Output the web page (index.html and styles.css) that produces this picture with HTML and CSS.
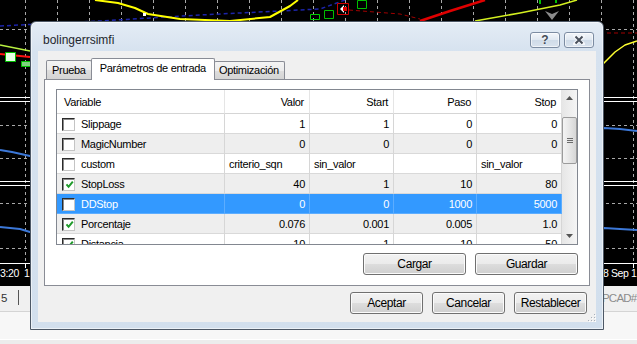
FILE: index.html
```html
<!DOCTYPE html>
<html lang="es">
<head>
    <meta charset="UTF-8">
    <title>bolingerrsimfi</title>
    <link rel="stylesheet" href="styles.css">
</head>
<body>
<div class="screen">
    <!-- grafico de fondo (MetaTrader) -->
    <svg class="chart" width="637" height="344" viewBox="0 0 637 344">
        <defs>
            <pattern id="vgrid" x="25" y="0" width="32" height="6" patternUnits="userSpaceOnUse">
                <rect width="1" height="3" fill="#a8a8a8"/>
            </pattern>
        </defs>
        <rect width="637" height="286" fill="#000"/>
        <rect width="637" height="263" fill="url(#vgrid)"/>
        <g stroke="#a8a8a8" stroke-dasharray="3 3">
            <line x1="0" y1="29.5" x2="637" y2="29.5"/>
            <line x1="0" y1="125.5" x2="637" y2="125.5"/>
            <line x1="0" y1="158.5" x2="637" y2="158.5"/>
            <line x1="0" y1="203.5" x2="637" y2="203.5"/>
            <line x1="0" y1="248.5" x2="637" y2="248.5"/>
        </g>
        <g stroke="#fff">
            <line x1="0" y1="97.5" x2="637" y2="97.5"/>
            <line x1="0" y1="101.5" x2="637" y2="101.5"/>
            <line x1="0" y1="181.5" x2="637" y2="181.5"/>
            <line x1="0" y1="185.5" x2="637" y2="185.5"/>
            <line x1="0" y1="263.5" x2="637" y2="263.5"/>
            <line x1="25.5" y1="263" x2="25.5" y2="268"/>
            <line x1="633.5" y1="263" x2="633.5" y2="268"/>
        </g>
        <!-- indicadores -->
        <g fill="none" stroke-linejoin="round">
            <polyline points="0,26 100,21 200,15 320,9 345,0" stroke="#1c24a8" stroke-width="1.5" stroke-dasharray="4 3"/>
            <polyline points="95,0 118,3 135,8 148,14 180,19 230,21 270,17 290,6 298,0" stroke="#ffff00" stroke-width="2"/>
            <polyline points="0,45 30,51" stroke="#b8f040" stroke-width="1.5"/>
            <polyline points="0,54 30,57" stroke="#ff1010" stroke-width="2"/>
            <polyline points="349,10 400,14 420,19" stroke="#a00000" stroke-dasharray="4 3"/>
            <polyline points="420,21 450,11 485,0" stroke="#e00000" stroke-width="2.5"/>
            <polyline points="475,21 520,13 560,5 577,0" stroke="#d4f020" stroke-width="1.5"/>
            <polyline points="600,33 637,33" stroke="#a00000" stroke-dasharray="4 3"/>
            <polyline points="603,64 615,52 625,45 637,41" stroke="#ffff30" stroke-width="1.5"/>
            <polyline points="0,150 12,152 30,156 604,128 620,129 637,131" stroke="#3c78d8" stroke-width="2"/>
            <polyline points="0,227 20,229 30,232 604,228 620,229 637,230" stroke="#3c78d8" stroke-width="2"/>
            <rect x="5.5" y="52.5" width="10" height="9" stroke="#00c000" fill="#e6ffe6"/>
            <rect x="21.5" y="61.5" width="9" height="5" stroke="#00c000" fill="#7fd27f"/>
            <rect x="310.5" y="14.5" width="9" height="5" stroke="#00d000"/>
            <rect x="324.5" y="10.5" width="9" height="8" stroke="#00c000"/>
            <rect x="357.5" y="0.5" width="9" height="8" stroke="#00c000"/>
            <rect x="337.5" y="3.5" width="11" height="11" stroke="#d00000"/>
            <line x1="540" y1="0" x2="540" y2="4" stroke="#00c000" stroke-width="2"/>
            <line x1="556" y1="0" x2="556" y2="3" stroke="#00c000" stroke-width="2"/>
        </g>
        <rect x="143" y="13" width="3" height="3" fill="#fff"/>
        <polygon points="340,9 344,5 344,13" fill="#fff"/>
        <rect x="343" y="7" width="4" height="4" fill="#e00000"/>
        <polygon points="545,11 552,14 559,11 552,20" fill="#8a8a8a"/>
        <g font-family="Liberation Sans, Arial, sans-serif" font-size="10.5" letter-spacing="-0.4" fill="#fff">
            <text x="0" y="277">3:20</text>
            <text x="24" y="277">1</text>
            <text x="603" y="277">8 Sep 1</text>
        </g>
        <!-- barra inferior -->
        <rect y="286" width="637" height="25" fill="#f0f0f0"/>
        <rect y="311" width="637" height="1" fill="#d4d4d4"/>
        <rect y="312" width="637" height="27" fill="#f7f7f7"/>
        <rect y="339" width="637" height="1" fill="#fff"/>
        <rect y="340" width="637" height="4" fill="#ececec"/>
        <g font-family="Liberation Sans, Arial, sans-serif" font-size="11.5" letter-spacing="-0.8">
            <text x="1" y="302" fill="#333">5</text>
            <text x="602" y="302" fill="#8c8c8c">PCAD#</text>
        </g>
        <line x1="18.5" y1="290" x2="18.5" y2="305" stroke="#555"/>
    </svg>

    <div class="window">
        <div class="titlebar">
            <span class="title">bolingerrsimfi</span>
            <span class="tbtn help">?</span>
            <span class="tbtn">
                <svg width="12" height="10" viewBox="0 0 12 10">
                    <path d="M2 1 L10 9 M10 1 L2 9" stroke="#f6f8fb" stroke-width="4" stroke-linecap="round"/>
                    <path d="M2.5 1.5 L9.5 8.5 M9.5 1.5 L2.5 8.5" stroke="#4a515c" stroke-width="2"/>
                </svg>
            </span>
        </div>

        <div class="client">
            <div class="tabs">
                <div class="tab">Prueba</div>
                <div class="tab active">Parámetros de entrada</div>
                <div class="tab">Optimización</div>
            </div>

            <div class="panel">
                <div class="list">
                    <div class="grid">
                        <div class="row head">
                            <div class="cell">Variable</div>
                            <div class="cell num">Valor</div>
                            <div class="cell num">Start</div>
                            <div class="cell num">Paso</div>
                            <div class="cell num">Stop</div>
                        </div>
                        <div class="row">
                            <div class="cell var"><span class="check"></span>Slippage</div>
                            <div class="cell num">1</div>
                            <div class="cell num">1</div>
                            <div class="cell num">0</div>
                            <div class="cell num">0</div>
                        </div>
                        <div class="row alt">
                            <div class="cell var"><span class="check"></span>MagicNumber</div>
                            <div class="cell num">0</div>
                            <div class="cell num">0</div>
                            <div class="cell num">0</div>
                            <div class="cell num">0</div>
                        </div>
                        <div class="row">
                            <div class="cell var"><span class="check"></span>custom</div>
                            <div class="cell">criterio_sqn</div>
                            <div class="cell">sin_valor</div>
                            <div class="cell"></div>
                            <div class="cell">sin_valor</div>
                        </div>
                        <div class="row alt">
                            <div class="cell var"><span class="check on"><svg viewBox="0 0 9 9"><path d="M1.5 4.3 L3.6 6.8 L7.8 1.6"/></svg></span>StopLoss</div>
                            <div class="cell num">40</div>
                            <div class="cell num">1</div>
                            <div class="cell num">10</div>
                            <div class="cell num">80</div>
                        </div>
                        <div class="row selected">
                            <div class="cell var"><span class="check"></span>DDStop</div>
                            <div class="cell num">0</div>
                            <div class="cell num">0</div>
                            <div class="cell num">1000</div>
                            <div class="cell num">5000</div>
                        </div>
                        <div class="row alt">
                            <div class="cell var"><span class="check on"><svg viewBox="0 0 9 9"><path d="M1.5 4.3 L3.6 6.8 L7.8 1.6"/></svg></span>Porcentaje</div>
                            <div class="cell num">0.076</div>
                            <div class="cell num">0.001</div>
                            <div class="cell num">0.005</div>
                            <div class="cell num">1.0</div>
                        </div>
                        <div class="row">
                            <div class="cell var"><span class="check on"><svg viewBox="0 0 9 9"><path d="M1.5 4.3 L3.6 6.8 L7.8 1.6"/></svg></span>Distancia</div>
                            <div class="cell num">10</div>
                            <div class="cell num">1</div>
                            <div class="cell num">10</div>
                            <div class="cell num">50</div>
                        </div>
                    </div>
                    <div class="scrollbar">
                        <div class="sb-arrow"><svg width="7" height="4" viewBox="0 0 7 4"><path d="M0 4 L3.5 0 L7 4 Z" fill="#555"/></svg></div>
                        <div class="sb-thumb"><span></span><span></span><span></span></div>
                        <div class="sb-space"></div>
                        <div class="sb-arrow"><svg width="7" height="4" viewBox="0 0 7 4"><path d="M0 0 L3.5 4 L7 0 Z" fill="#555"/></svg></div>
                    </div>
                </div>
                <div class="panel-buttons">
                    <button class="btn wide">Cargar</button>
                    <button class="btn wide">Guardar</button>
                </div>
            </div>

            <div class="actions">
                <button class="btn">Aceptar</button>
                <button class="btn">Cancelar</button>
                <button class="btn">Restablecer</button>
            </div>

            <svg class="grip" width="9" height="9" viewBox="0 0 9 9">
                <g fill="#fff">
                    <rect x="8" y="2" width="1" height="1"/><rect x="8" y="5" width="1" height="1"/><rect x="5" y="5" width="1" height="1"/>
                    <rect x="8" y="8" width="1" height="1"/><rect x="5" y="8" width="1" height="1"/><rect x="2" y="8" width="1" height="1"/>
                </g>
                <g fill="#a8b0ba">
                    <rect x="7" y="1" width="1" height="1"/><rect x="7" y="4" width="1" height="1"/><rect x="4" y="4" width="1" height="1"/>
                    <rect x="7" y="7" width="1" height="1"/><rect x="4" y="7" width="1" height="1"/><rect x="1" y="7" width="1" height="1"/>
                </g>
            </svg>
        </div>
    </div>
</div>
</body>
</html>
```

FILE: styles.css
```css
body {
    margin: 0;
    background: #000;
    font-family: "Liberation Sans", Arial, sans-serif;
    font-size: 11px;
    letter-spacing: -0.3px;
    color: #000;
}
.screen {
    position: relative;
    width: 637px;
    height: 344px;
    overflow: hidden;
}
.chart {
    position: absolute;
    left: 0;
    top: 0;
}

/* ventana de dialogo */
.window {
    position: absolute;
    left: 30px;
    top: 21px;
    width: 572px;
    height: 307px;
    border: 1px solid #4d5866;
    border-radius: 6px 6px 0 0;
    background: linear-gradient(#e4ecf5, #d6e2ef 30px, #d2dfed);
    box-shadow: inset 0 0 0 1px rgba(255, 255, 255, 0.55);
    display: flex;
    flex-direction: column;
}
.titlebar {
    height: 29px;
    box-sizing: border-box;
    padding: 10px 9px 0 12px;
    display: flex;
    align-items: flex-start;
    gap: 4px;
}
.title {
    flex: 1;
    font-size: 12px;
    letter-spacing: 0;
    line-height: 17px;
    color: #1f262e;
}
.tbtn {
    width: 28px;
    height: 14px;
    border: 1px solid #7c8ca2;
    border-radius: 3px;
    background: linear-gradient(#f3f6fa, #e0e8f1 50%, #cfdbe8 51%, #d9e3ee);
    box-shadow: inset 0 0 0 1px rgba(255, 255, 255, 0.6);
    display: flex;
    align-items: center;
    justify-content: center;
}
.tbtn.help {
    font-weight: bold;
    font-size: 12px;
    letter-spacing: 0;
    color: #454c57;
    text-shadow: 0 0 2px #fff;
}

.client {
    position: relative;
    flex: 1;
    margin: 0 7px 7px;
    padding-top: 7px;
    background: #f0f0f0;
    display: flex;
    flex-direction: column;
}

/* pestañas */
.tabs {
    display: flex;
    align-items: flex-end;
    height: 21px;
    padding-left: 8px;
    position: relative;
    z-index: 1;
}
.tab {
    height: 18px;
    line-height: 18px;
    padding: 0 5px;
    margin-right: -1px;
    border: 1px solid #898c95;
    border-bottom: none;
    border-radius: 2px 2px 0 0;
    background: linear-gradient(#f4f4f4, #ececec 50%, #dedede 51%, #d4d4d4);
}
.tab:last-child {
    height: 17px;
    line-height: 17px;
    padding: 0 5px 0 4px;
}
.tab.active {
    height: 21px;
    line-height: 19px;
    padding: 0 8px;
    margin: 0 -1px -1px 0;
    background: #fff;
    position: relative;
    z-index: 2;
}

.panel {
    box-sizing: border-box;
    height: 207px;
    margin: 0 6px;
    padding: 9px 11px 0;
    border: 1px solid #898c95;
    background: #fff;
}

/* lista de parametros */
.list {
    height: 154px;
    border: 1px solid #828790;
    display: flex;
    overflow: hidden;
}
.grid {
    width: 505px;
}
.row {
    display: grid;
    grid-template-columns: 168px 85px 84px 83px 85px;
    height: 20px;
}
.row.alt {
    background: #eeeeee;
}
.row.selected {
    background: #3399ff;
    color: #fff;
}
.cell {
    box-sizing: border-box;
    border-right: 1px solid #d6d6d6;
    border-bottom: 1px solid #d9d9d9;
    padding: 0 4px;
    line-height: 20px;
    white-space: nowrap;
    overflow: hidden;
}
.cell.num {
    text-align: right;
}
.row.selected .cell {
    border-color: #5cadff;
}
.row.head {
    height: 24px;
    background: #fff;
}
.row.head .cell {
    line-height: 24px;
    padding: 0 5px 0 7px;
    border-right-color: #e5e5e5;
    border-bottom-color: #d5d5d5;
}
.cell.var {
    display: flex;
    align-items: center;
    padding-left: 5px;
}
.check {
    width: 13px;
    height: 13px;
    box-sizing: border-box;
    margin: 1px 6px 0 0;
    border: 1px solid;
    border-color: #2a2a2a #c4c4c4 #c4c4c4 #2a2a2a;
    box-shadow: inset 1px 1px 0 #8a8a8a;
    background: #fff;
    display: flex;
    align-items: center;
    justify-content: center;
}
.check svg {
    width: 9px;
    height: 9px;
    margin: 1px 0 0 1px;
}
.check path {
    fill: none;
    stroke: #1f9a2a;
    stroke-width: 2;
}

.scrollbar {
    width: 15px;
    background: linear-gradient(90deg, #e6e6e6, #f5f5f5);
    display: flex;
    flex-direction: column;
}
.sb-arrow {
    height: 16px;
    display: flex;
    align-items: center;
    justify-content: center;
}
.sb-thumb {
    height: 45px;
    margin-top: 11px;
    border: 1px solid #9b9b9b;
    border-radius: 2px;
    background: linear-gradient(90deg, #f4f4f4, #e6e6e6 50%, #d6d6d6);
    display: flex;
    flex-direction: column;
    align-items: center;
    justify-content: center;
    gap: 1px;
}
.sb-thumb span {
    width: 6px;
    height: 1px;
    background: #6b6b6b;
}
.sb-space {
    flex: 1;
}

/* botones */
.btn {
    height: 22px;
    width: 73px;
    box-sizing: border-box;
    padding: 0;
    border: 1px solid #707070;
    border-radius: 3px;
    background: linear-gradient(#f2f2f2, #ebebeb 50%, #dddddd 51%, #cfcfcf);
    box-shadow: inset 0 0 0 1px #fbfbfb;
    font-family: inherit;
    font-size: 12px;
    letter-spacing: -0.4px;
    color: #000;
}
.btn.wide {
    width: 103px;
}
.panel-buttons {
    display: flex;
    justify-content: flex-end;
    gap: 9px;
    margin-top: 8px;
}
.actions {
    display: flex;
    justify-content: flex-end;
    gap: 9px;
    padding: 6px 9px 0 0;
}
.grip {
    position: absolute;
    right: 0;
    bottom: 0;
}
```
